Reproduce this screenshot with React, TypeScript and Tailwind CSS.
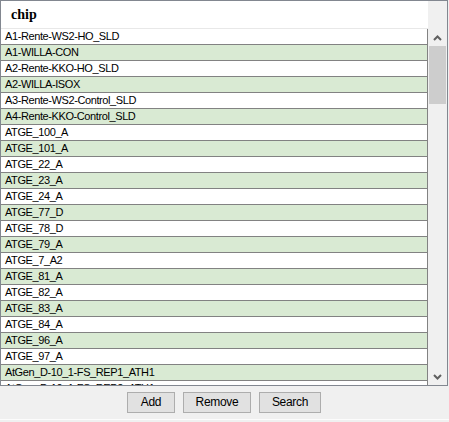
const rows = [
  "A1-Rente-WS2-HO_SLD",
  "A1-WILLA-CON",
  "A2-Rente-KKO-HO_SLD",
  "A2-WILLA-ISOX",
  "A3-Rente-WS2-Control_SLD",
  "A4-Rente-KKO-Control_SLD",
  "ATGE_100_A",
  "ATGE_101_A",
  "ATGE_22_A",
  "ATGE_23_A",
  "ATGE_24_A",
  "ATGE_77_D",
  "ATGE_78_D",
  "ATGE_79_A",
  "ATGE_7_A2",
  "ATGE_81_A",
  "ATGE_82_A",
  "ATGE_83_A",
  "ATGE_84_A",
  "ATGE_96_A",
  "ATGE_97_A",
  "AtGen_D-10_1-FS_REP1_ATH1",
  "AtGen_D-10_1-FS_REP2_ATH1",
];

const Chevron = ({ up }: { up?: boolean }) => (
  <svg width="9" height="6" viewBox="0 0 9 6">
    <path
      d={up ? "M1 5 L4.5 1.5 L8 5" : "M1 1 L4.5 4.5 L8 1"}
      fill="none"
      stroke="#606060"
      strokeWidth="2"
    />
  </svg>
);

const Row = ({ text, index }: { text: string; index: number }) => (
  <div
    className={`h-[16px] shrink-0 border-b border-[#828282] pl-[4px] leading-[15px] text-[11px] tracking-[-0.4px] text-black whitespace-nowrap ${
      index % 2 === 0 ? "bg-white" : "bg-[#d9ead3]"
    }`}
  >
    {text}
  </div>
);

const App = () => {
  return (
    <div className="w-[449px] h-[422px] bg-[#f0f0f0] font-['Liberation_Sans',Arial,sans-serif] overflow-hidden">
      <div className="w-[448px] h-[386px] border border-[#828790] flex">
        <div className="w-[427px] flex flex-col overflow-hidden">
          <div className="h-[28px] shrink-0 bg-white border-b border-[#e8e8e8] pl-[10px] pt-[5px] font-['Liberation_Serif',serif] font-bold text-[14px] leading-[17px]">
            chip
          </div>
          <div className="flex-1 flex flex-col overflow-hidden border-r border-[#828282]">
            {rows.map((text, index) => (
              <Row key={text} text={text} index={index} />
            ))}
          </div>
        </div>
        <div className="flex-1 flex flex-col">
          <div className="h-[28px] shrink-0" />
          <div className="h-[17px] flex items-center justify-center">
            <Chevron up />
          </div>
          <div className="mx-[1px] h-[58px] bg-[#cdcdcd]" />
          <div className="flex-1" />
          <div className="h-[17px] flex items-center justify-center">
            <Chevron />
          </div>
        </div>
      </div>
      <div className="flex gap-[8px] pl-[127px] pt-[6px]">
        <button className="w-[48px] h-[21px] bg-[#e1e1e1] border border-[#adadad] text-[12px] tracking-[-0.3px] leading-[19px] text-black">
          Add
        </button>
        <button className="w-[68px] h-[21px] bg-[#e1e1e1] border border-[#adadad] text-[12px] tracking-[-0.3px] leading-[19px] text-black">
          Remove
        </button>
        <button className="w-[62px] h-[21px] bg-[#e1e1e1] border border-[#adadad] text-[12px] tracking-[-0.3px] leading-[19px] text-black">
          Search
        </button>
      </div>
      <div className="mt-[6px] h-[1px] bg-[#fcfcfc]" />
    </div>
  );
};

export default App;
